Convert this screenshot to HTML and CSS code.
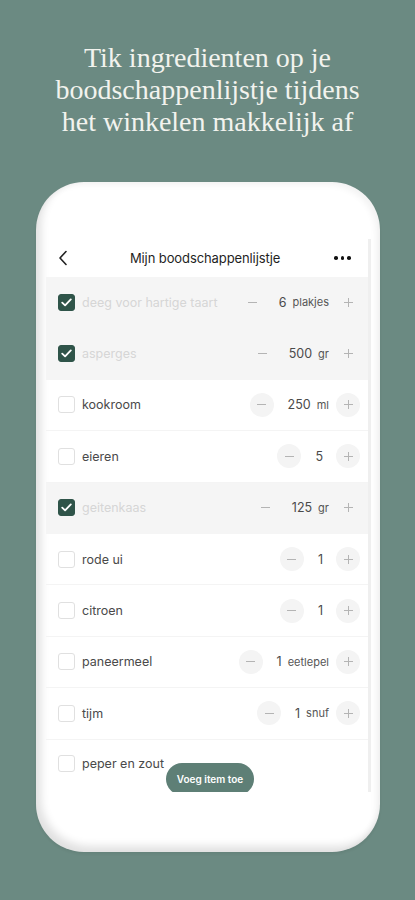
FILE: index.html
```html
<!DOCTYPE html>
<html lang="nl">
<head>
<meta charset="utf-8">
<title>Mijn boodschappenlijstje</title>
<link rel="stylesheet" href="styles.css">
</head>
<body>
<h1 class="headline">Tik ingredienten op je<br>boodschappenlijstje tijdens<br>het winkelen makkelijk af</h1>

<div class="phone">
  <div class="screen">
    <div class="topbar">
      <svg class="back" width="10" height="16" viewBox="0 0 10 16"><path d="M8 1.5 L2 8 L8 14.5" fill="none" stroke="#222" stroke-width="1.6" stroke-linecap="round" stroke-linejoin="round"/></svg>
      <span class="title">Mijn boodschappenlijstje</span>
      <span class="more"><i></i><i></i><i></i></span>
    </div>

    <ul class="list">
      <li class="row done">
        <span class="box"><svg width="11" height="9" viewBox="0 0 11 9"><path d="M1.2 4.6 L4.1 7.4 L9.8 1.4" fill="none" stroke="#fff" stroke-width="1.8" stroke-linecap="round" stroke-linejoin="round"/></svg></span>
        <span class="name">deeg voor hartige taart</span>
        <span class="qty"><span class="btn minus"></span><span class="num">6</span><span class="unit">plakjes</span><span class="btn plus"></span></span>
      </li>
      <li class="row done">
        <span class="box"><svg width="11" height="9" viewBox="0 0 11 9"><path d="M1.2 4.6 L4.1 7.4 L9.8 1.4" fill="none" stroke="#fff" stroke-width="1.8" stroke-linecap="round" stroke-linejoin="round"/></svg></span>
        <span class="name">asperges</span>
        <span class="qty"><span class="btn minus"></span><span class="num">500</span><span class="unit">gr</span><span class="btn plus"></span></span>
      </li>
      <li class="row">
        <span class="box"></span>
        <span class="name">kookroom</span>
        <span class="qty"><span class="btn minus"></span><span class="num">250</span><span class="unit">ml</span><span class="btn plus"></span></span>
      </li>
      <li class="row">
        <span class="box"></span>
        <span class="name">eieren</span>
        <span class="qty"><span class="btn minus"></span><span class="num">5</span><span class="unit"></span><span class="btn plus"></span></span>
      </li>
      <li class="row done">
        <span class="box"><svg width="11" height="9" viewBox="0 0 11 9"><path d="M1.2 4.6 L4.1 7.4 L9.8 1.4" fill="none" stroke="#fff" stroke-width="1.8" stroke-linecap="round" stroke-linejoin="round"/></svg></span>
        <span class="name">geitenkaas</span>
        <span class="qty"><span class="btn minus"></span><span class="num">125</span><span class="unit">gr</span><span class="btn plus"></span></span>
      </li>
      <li class="row">
        <span class="box"></span>
        <span class="name">rode ui</span>
        <span class="qty"><span class="btn minus"></span><span class="num">1</span><span class="unit"></span><span class="btn plus"></span></span>
      </li>
      <li class="row">
        <span class="box"></span>
        <span class="name">citroen</span>
        <span class="qty"><span class="btn minus"></span><span class="num">1</span><span class="unit"></span><span class="btn plus"></span></span>
      </li>
      <li class="row">
        <span class="box"></span>
        <span class="name">paneermeel</span>
        <span class="qty"><span class="btn minus"></span><span class="num">1</span><span class="unit">eetlepel</span><span class="btn plus"></span></span>
      </li>
      <li class="row">
        <span class="box"></span>
        <span class="name">tijm</span>
        <span class="qty"><span class="btn minus"></span><span class="num">1</span><span class="unit">snuf</span><span class="btn plus"></span></span>
      </li>
      <li class="row last">
        <span class="box"></span>
        <span class="name">peper en zout</span>
      </li>
    </ul>

    <button class="add">Voeg item toe</button>
  </div>
</div>
</body>
</html>
```

FILE: styles.css
```css
* { box-sizing: border-box; }

html, body {
  margin: 0;
  padding: 0;
}

body {
  background: #6b8a82;
  width: 415px;
  height: 900px;
  overflow: hidden;
  font-family: "Inter", "Roboto", sans-serif;
}

.headline {
  margin: 0;
  padding-top: 42px;
  font-family: "Liberation Serif", serif;
  font-weight: normal;
  font-size: 28px;
  line-height: 32px;
  text-align: center;
  color: #f2f3ee;
}

.phone {
  margin: 44px 0 0 36px;
  width: 344px;
  height: 670px;
  background: #fff;
  border-radius: 48px;
  padding: 57px 9px 0 10px;
  box-shadow:
    inset 5px -6px 8px rgba(0, 0, 0, 0.12),
    inset -4px 3px 6px rgba(0, 0, 0, 0.05),
    0 2px 3px rgba(0, 0, 0, 0.06);
}

.screen {
  position: relative;
  height: 553px;
  border-right: 3px solid #efefef;
  overflow: hidden;
}

.topbar {
  height: 38px;
  display: flex;
  align-items: center;
  justify-content: space-between;
  padding: 0 17px 0 12px;
}

.back { display: block; }

.title {
  font-size: 13px;
  font-weight: 400;
  color: #1f1f1f;
  letter-spacing: -0.1px;
  margin-left: 8px;
}

.more {
  display: flex;
  gap: 3px;
}
.more i {
  display: block;
  width: 3.6px;
  height: 3.6px;
  border-radius: 50%;
  background: #111;
}

.list {
  list-style: none;
  margin: 0;
  padding: 0;
}

.row {
  height: 51.4px;
  display: flex;
  align-items: center;
  padding: 0 8px 0 12px;
  border-bottom: 1px solid #f4f4f4;
}

.row.done {
  background: #f5f5f5;
  border-bottom-color: #f5f5f5;
}

.row.last { border-bottom: 0; padding-bottom: 3px; }

.box {
  width: 17px;
  height: 17px;
  border: 1.3px solid #e0e0e0;
  border-radius: 3px;
  display: flex;
  align-items: center;
  justify-content: center;
  flex: none;
}

.done .box {
  background: #2f5449;
  border-color: #2f5449;
}

.name {
  margin-left: 7px;
  font-size: 12.5px;
  color: #4a4a4a;
  flex: 1;
}

.done .name { color: #d6d6d6; }

.qty {
  display: flex;
  align-items: center;
}

.btn {
  position: relative;
  width: 24px;
  height: 24px;
  border-radius: 50%;
  background: #f4f4f4;
  flex: none;
}

.done .btn { background: transparent; }

.btn::before,
.btn::after {
  content: "";
  position: absolute;
  left: 50%;
  top: 50%;
  background: #b4b4b4;
}
.btn::before {
  width: 9px;
  height: 1px;
  margin: -0.5px 0 0 -4.5px;
}
.plus::after {
  width: 1px;
  height: 9px;
  margin: -4.5px 0 0 -0.5px;
}
.minus::after { display: none; }

.minus { margin-right: 14px; }

.num {
  font-size: 12.5px;
  color: #4a4a4a;
}

.unit {
  margin: 0 7px 0 6px;
  font-size: 11px;
  color: #555;
}

.add {
  position: absolute;
  left: 120px;
  top: 524px;
  width: 88px;
  height: 32px;
  border: 0;
  border-radius: 16px;
  background: #5e7f76;
  color: #fff;
  font-family: "Inter", "Roboto", sans-serif;
  font-size: 10px;
  font-weight: 600;
  padding: 0;
}
```
